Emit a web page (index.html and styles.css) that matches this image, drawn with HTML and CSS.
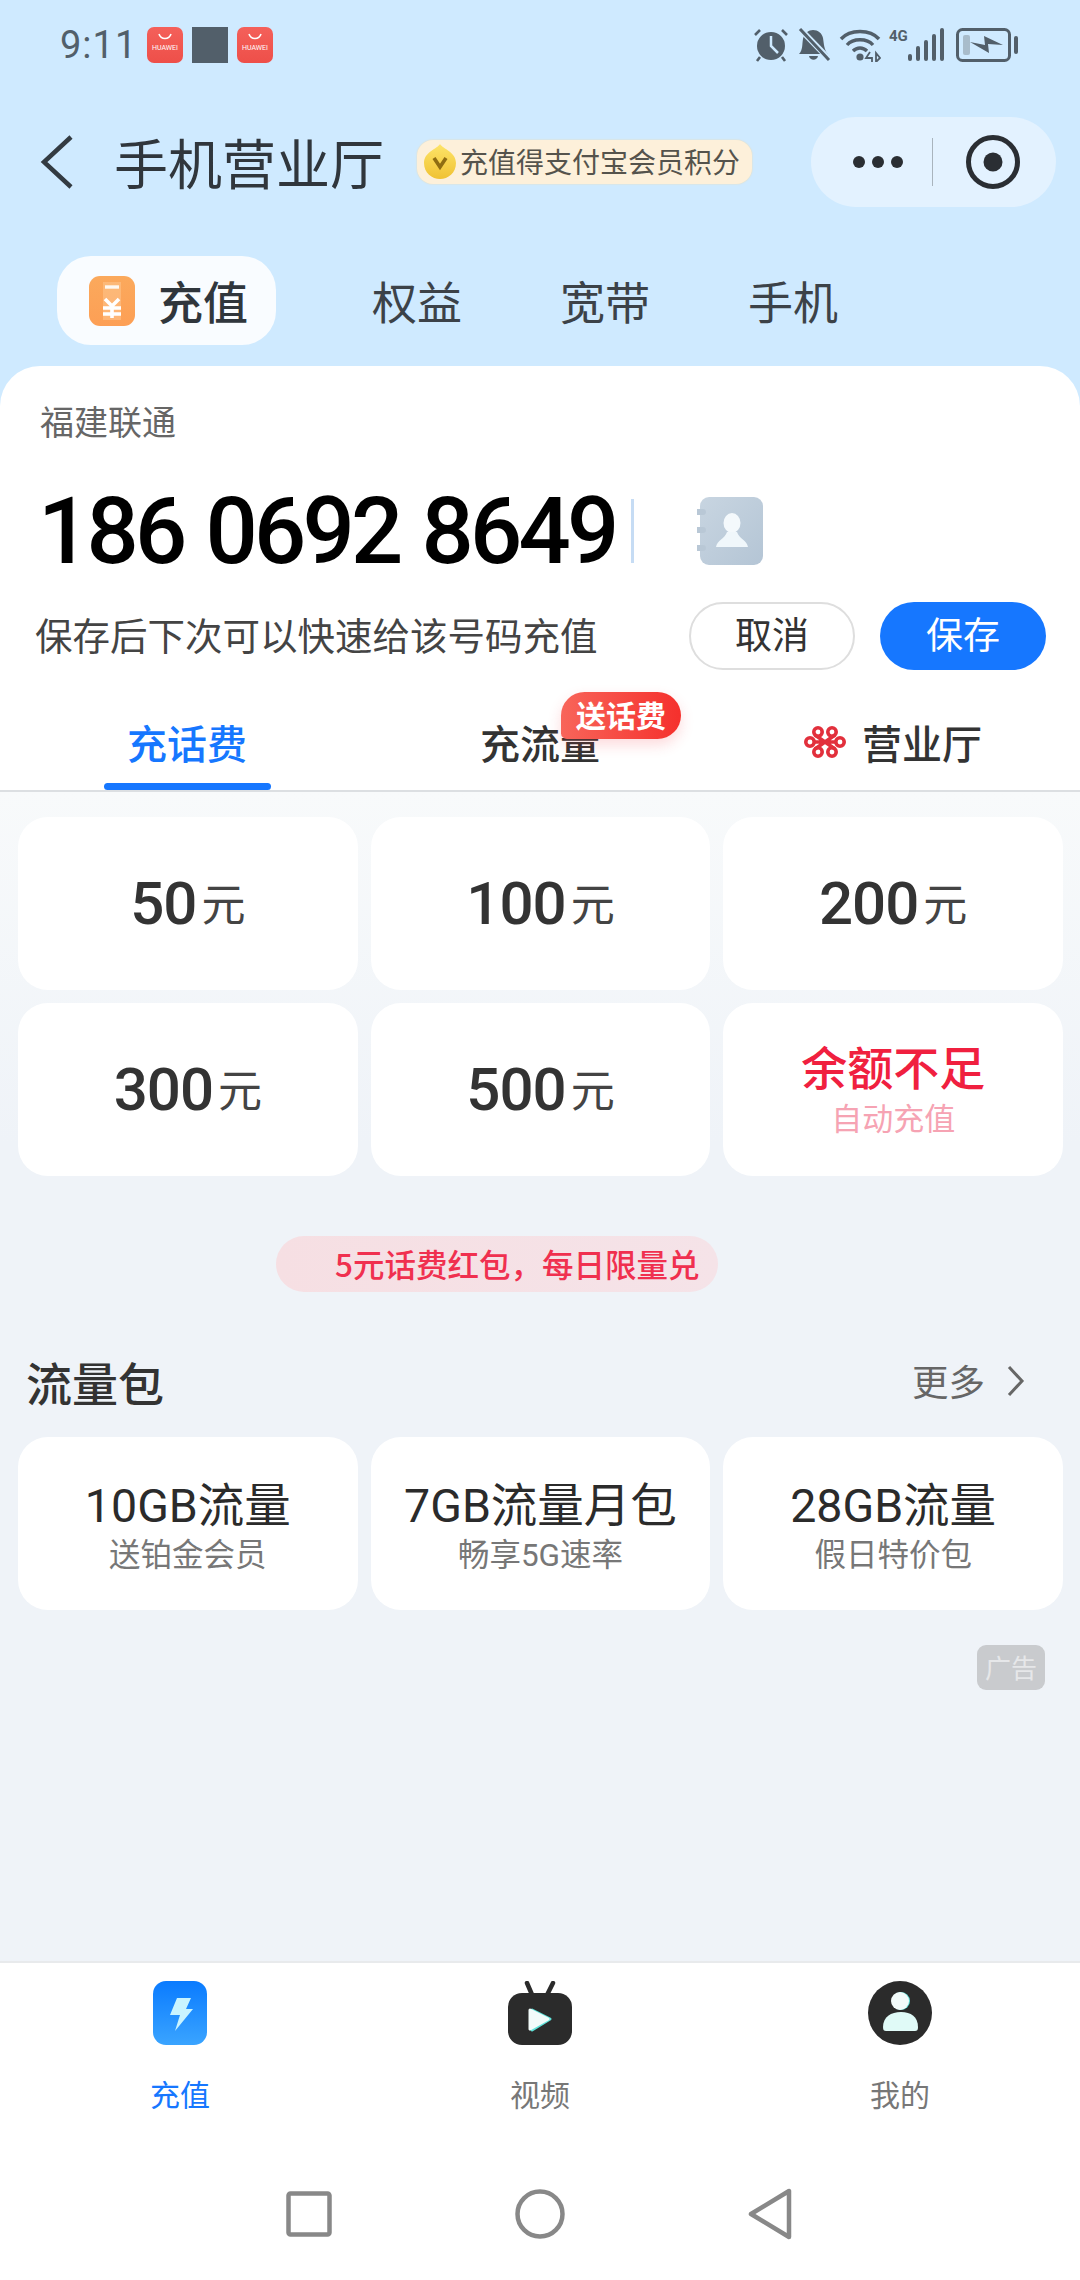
FILE: index.html
```html
<!DOCTYPE html>
<html lang="zh-CN">
  <head>
    <meta charset="UTF-8" />
    <meta name="viewport" content="width=device-width, initial-scale=1.0" />
    <title>手机营业厅</title>
    <link rel="stylesheet" href="styles.css">
  </head>
  <body>
    <div class="status-bar">
      <div class="status-left">
        <span class="time">9:11</span>
        <div class="app-icon"><svg width="16" height="8" viewBox="0 0 16 8" fill="none"><path d="M2 1C4 7 12 7 14 1" stroke="white" stroke-width="1.6"/></svg><span>HUAWEI</span></div>
        <div class="app-square"></div>
        <div class="app-icon"><svg width="16" height="8" viewBox="0 0 16 8" fill="none"><path d="M2 1C4 7 12 7 14 1" stroke="white" stroke-width="1.6"/></svg><span>HUAWEI</span></div>
      </div>
      <div class="status-right">
        <svg width="36" height="34" viewBox="0 0 36 34" fill="none">
          <circle cx="18" cy="18" r="14" fill="#525f6a"/>
          <path d="M18 8V18L25 25" stroke="#cfeaff" stroke-width="2.5"/>
          <path d="M2 7L7 2M34 7L29 2M7 29L4 33M29 29L32 33" stroke="#525f6a" stroke-width="2.6"/>
        </svg>
        <svg width="34" height="34" viewBox="0 0 34 34" fill="none">
          <path d="M2 26C6 22 5 16 6 11C7 5 12 2 16 2C21 2 25 5 26 10C27 16 27 22 31 26Z" fill="#525f6a"/>
          <path d="M12 28H21C20 33 13 33 12 28Z" fill="#525f6a"/>
          <path d="M3 1L32 31" stroke="#cfeaff" stroke-width="6"/>
          <path d="M3 1L32 32" stroke="#525f6a" stroke-width="3"/>
        </svg>
        <svg class="wifi" width="42" height="34" viewBox="0 0 42 34" fill="none">
          <path d="M2 11C11 1 31 1 40 11M8 17C14 10 28 10 34 17M14 23C18 19 24 19 28 23" stroke="#525f6a" stroke-width="3.4"/>
          <circle cx="21" cy="29" r="3.6" fill="#525f6a"/>
          <path d="M31 24L27 30H33V34M37 25V34L41 30Z" stroke="#525f6a" stroke-width="1.8"/>
        </svg>
        <div class="signal">
          <span class="net">4G</span>
          <svg width="36" height="34" viewBox="0 0 36 34" fill="#525f6a">
            <rect x="0" y="26" width="4" height="7" rx="2"/>
            <rect x="8" y="18" width="4" height="15" rx="2"/>
            <rect x="16" y="12" width="4" height="21" rx="2"/>
            <rect x="24" y="6" width="4" height="27" rx="2"/>
            <rect x="32" y="0" width="4" height="33" rx="2"/>
          </svg>
        </div>
        <svg class="battery" width="64" height="34" viewBox="0 0 64 34" fill="none">
          <rect x="1.5" y="1.5" width="52" height="31" rx="5" stroke="#525f6a" stroke-width="3"/>
          <rect x="7" y="7" width="7" height="20" rx="2" fill="#a8bccb"/>
          <path d="M13 15L28 18L27 9L46 18L31 17L32 26Z" fill="#525f6a" transform="translate(1 -1)"/>
          <rect x="58" y="8" width="4" height="18" rx="2" fill="#525f6a"/>
        </svg>
      </div>
    </div>

    <div class="nav-bar">
      <svg class="back" width="34" height="54" viewBox="0 0 34 54" fill="none">
        <path d="M31 2L4 27L31 52" stroke="#333b42" stroke-width="4.5"/>
      </svg>
      <div class="nav-title">手机营业厅</div>
      <div class="nav-tip">
        <svg width="32" height="36" viewBox="0 0 32 36">
          <defs>
            <linearGradient id="coin" x1="0" y1="0" x2="0" y2="1">
              <stop offset="0" stop-color="#fde469"/>
              <stop offset="1" stop-color="#f0c233"/>
            </linearGradient>
          </defs>
          <path d="M16 0C19 5 32 8 32 19C32 29 24 35 16 35C8 35 0 29 0 19C0 8 13 5 16 0Z" fill="url(#coin)"/>
          <path d="M10 14L16 23L22 14" fill="none" stroke="#8f6d12" stroke-width="3.6"/>
        </svg>
        <span>充值得支付宝会员积分</span>
      </div>
      <div class="capsule">
        <div class="dots"><i></i><i></i><i></i></div>
        <div class="capsule-line"></div>
        <svg width="54" height="54" viewBox="0 0 54 54" fill="none">
          <circle cx="27" cy="27" r="24.5" stroke="#2a2e33" stroke-width="5"/>
          <circle cx="27" cy="27" r="9.5" fill="#2a2e33"/>
        </svg>
      </div>
    </div>

    <div class="top-tabs">
      <div class="top-tab active">
        <svg width="46" height="50" viewBox="0 0 46 50">
          <defs>
            <linearGradient id="orange" x1="0" y1="0" x2="0" y2="1">
              <stop offset="0" stop-color="#fba95c"/>
              <stop offset="1" stop-color="#fd9f55"/>
            </linearGradient>
          </defs>
          <rect width="46" height="50" rx="11" fill="url(#orange)"/>
          <rect x="14" y="6" width="18" height="38" fill="#ffd9b0" opacity="0.35"/>
          <path d="M16 11H30" stroke="#fff" stroke-width="3.4" opacity="0.9"/>
          <path d="M16 23L23 30L30 23M23 30V42M14 32H32M14 38H32" fill="none" stroke="#fff" stroke-width="3.6"/>
        </svg>
        <span>充值</span>
      </div>
      <div class="top-tab">权益</div>
      <div class="top-tab">宽带</div>
      <div class="top-tab">手机</div>
    </div>

    <div class="sheet">
      <div class="carrier">福建联通</div>
      <div class="number-row">
        <div class="number">186 0692 8649</div>
        <div class="caret"></div>
        <svg class="contact" width="66" height="68" viewBox="0 0 66 68">
          <defs>
            <linearGradient id="book" x1="0" y1="0" x2="1" y2="1">
              <stop offset="0" stop-color="#c8d5e1"/>
              <stop offset="1" stop-color="#b4c5d5"/>
            </linearGradient>
          </defs>
          <rect x="3" y="0" width="63" height="68" rx="9" fill="url(#book)"/>
          <path d="M1 15H6M1 33H6M1 51H6" stroke="#b9c8d6" stroke-width="6" stroke-linecap="round"/>
          <ellipse cx="35" cy="26" rx="8.5" ry="10" fill="#f4f9fc"/>
          <path d="M19 50C20 43 28 42 30 35H40C42 42 50 43 51 50Z" fill="#f0f7fb"/>
        </svg>
      </div>
      <div class="save-row">
        <div class="save-hint">保存后下次可以快速给该号码充值</div>
        <div class="btn btn-cancel">取消</div>
        <div class="btn btn-save">保存</div>
      </div>
      <div class="tabs">
        <div class="tab active">
          <span>充话费</span>
          <div class="tab-line"></div>
        </div>
        <div class="tab">
          <span class="tab-label">充流量<em class="tab-badge">送话费</em></span>
          <div class="tab-line"></div>
        </div>
        <div class="tab">
          <span class="tab-logo">
            <svg width="42" height="32" viewBox="0 0 42 32" fill="none" stroke="#e2303c" stroke-width="3.6">
              <circle cx="14" cy="6" r="4.2"/>
              <circle cx="28" cy="6" r="4.2"/>
              <circle cx="14" cy="26" r="4.2"/>
              <circle cx="28" cy="26" r="4.2"/>
              <circle cx="6" cy="16" r="4.2"/>
              <circle cx="36" cy="16" r="4.2"/>
              <path d="M10 16H32M11 9L31 23M31 9L11 23"/>
            </svg>
            营业厅
          </span>
          <div class="tab-line"></div>
        </div>
      </div>

      <div class="main">
        <div class="grid">
          <div class="card amount"><b>50</b><span>元</span></div>
          <div class="card amount"><b>100</b><span>元</span></div>
          <div class="card amount"><b>200</b><span>元</span></div>
          <div class="card amount"><b>300</b><span>元</span></div>
          <div class="card amount"><b>500</b><span>元</span></div>
          <div class="card auto">
            <div class="auto-title">余额不足</div>
            <div class="auto-sub">自动充值</div>
          </div>
        </div>

        <div class="promo">5元话费红包，每日限量兑</div>

        <div class="section-head">
          <div class="section-title">流量包</div>
          <div class="more">
            更多
            <svg width="18" height="32" viewBox="0 0 18 32" fill="none"><path d="M2 2L15 16L2 30" stroke="#666" stroke-width="3"/></svg>
          </div>
        </div>

        <div class="grid packs">
          <div class="card pack"><div class="pack-title">10GB流量</div><div class="pack-sub">送铂金会员</div></div>
          <div class="card pack"><div class="pack-title">7GB流量月包</div><div class="pack-sub">畅享5G速率</div></div>
          <div class="card pack"><div class="pack-title">28GB流量</div><div class="pack-sub">假日特价包</div></div>
        </div>

        <div class="ad-row"><div class="ad-tag">广告</div></div>
      </div>

      <div class="tabbar">
        <div class="tabbar-item active">
          <svg width="54" height="64" viewBox="0 0 54 64">
            <defs>
              <linearGradient id="bolt" x1="0" y1="0" x2="0" y2="1">
                <stop offset="0" stop-color="#0a7bff"/>
                <stop offset="1" stop-color="#3aa4ff"/>
              </linearGradient>
            </defs>
            <rect width="54" height="64" rx="13" fill="url(#bolt)"/>
            <path d="M24 17H38L33 28H40L22 50L27 34H17Z" fill="#c9f4ff"/>
          </svg>
          <span>充值</span>
        </div>
        <div class="tabbar-item">
          <svg width="64" height="64" viewBox="0 0 64 64" fill="none">
            <path d="M19 2L25 16M45 2L38 16" stroke="#2b2b2b" stroke-width="4.5" stroke-linecap="round"/>
            <rect y="12" width="64" height="52" rx="14" fill="#2b2b2b"/>
            <path d="M24 29L42 38L24 49Z" fill="#5fe3da" stroke="#5fe3da" stroke-width="3" stroke-linejoin="round"/>
            <path d="M22 29L40 38L22 48Z" fill="#f2fbfa" stroke="#f2fbfa" stroke-width="3" stroke-linejoin="round"/>
          </svg>
          <span>视频</span>
        </div>
        <div class="tabbar-item">
          <svg width="64" height="64" viewBox="0 0 64 64">
            <circle cx="32" cy="32" r="32" fill="#2b2b2b"/>
            <circle cx="33" cy="20" r="9" fill="#5fe3da"/>
            <circle cx="32" cy="20" r="9" fill="#f2fbfa"/>
            <path d="M15 46C15 36 23 31 33 31C43 31 50 36 50 46C50 49 49 50 47 50H18C16 50 15 49 15 46Z" fill="#e0faf7"/>
          </svg>
          <span>我的</span>
        </div>
      </div>

      <div class="sys-nav">
        <svg width="46" height="46" viewBox="0 0 46 46" fill="none"><rect x="2.5" y="2.5" width="41" height="41" rx="2" stroke="#888" stroke-width="4.5"/></svg>
        <svg width="50" height="50" viewBox="0 0 50 50" fill="none"><circle cx="25" cy="25" r="22.5" stroke="#888" stroke-width="4.5"/></svg>
        <svg width="44" height="52" viewBox="0 0 44 52" fill="none"><path d="M41 3V49L3 26Z" stroke="#888" stroke-width="4.5" stroke-linejoin="round"/></svg>
      </div>
    </div>
  </body>
</html>
```

FILE: styles.css
```css
* {
  box-sizing: border-box;
}

html,
body {
  margin: 0;
  padding: 0;
}

body {
  width: 1080px;
  height: 2280px;
  overflow: hidden;
  display: flex;
  flex-direction: column;
  background-color: #cfeaff;
  color: #333;
  font-family: "Noto Sans CJK SC", Roboto, sans-serif;
}

svg {
  display: block;
  flex-shrink: 0;
}

/* status bar */
.status-bar {
  height: 90px;
  display: flex;
  align-items: center;
  justify-content: space-between;
  padding: 0 60px;
}

.status-left {
  display: flex;
  align-items: center;
}

.time {
  font-family: Roboto, sans-serif;
  font-size: 38px;
  color: #525f6a;
  width: 87px;
  letter-spacing: 1px;
}

.app-icon {
  width: 36px;
  height: 36px;
  border-radius: 7px;
  background: linear-gradient(#f4605a, #ee4f49);
  display: flex;
  flex-direction: column;
  align-items: center;
  padding-top: 6px;
  gap: 3px;
}

.app-icon span {
  font-family: Roboto, sans-serif;
  font-size: 7px;
  line-height: 8px;
  color: #fff;
}

.app-square {
  width: 36px;
  height: 36px;
  margin: 0 9px;
  background-color: #525f6a;
}

.status-right {
  display: flex;
  align-items: center;
  gap: 8px;
}

.signal {
  display: flex;
  align-items: flex-start;
}

.net {
  font-family: Roboto, sans-serif;
  font-size: 15px;
  line-height: 16px;
  font-weight: 700;
  color: #525f6a;
  margin-right: 1px;
  width: 18px;
}

.battery {
  margin-left: 4px;
}

/* mini program nav */
.nav-bar {
  height: 90px;
  margin-top: 27px;
  display: flex;
  align-items: center;
  padding-left: 40px;
}

.nav-title {
  font-size: 54px;
  line-height: 60px;
  margin-left: 40px;
  color: #30363c;
  width: 266px;
  white-space: nowrap;
}

.nav-tip {
  width: 335px;
  height: 44px;
  margin-left: 37px;
  border-radius: 16px;
  background-color: #fdf0da;
  box-shadow: 0 0 2px #f0dcae;
  display: flex;
  align-items: center;
  padding-left: 7px;
  gap: 4px;
}

.nav-tip span {
  font-size: 28px;
  padding-bottom: 2px;
  color: #55534c;
  white-space: nowrap;
}

.capsule {
  width: 245px;
  height: 90px;
  margin-left: 59px;
  border-radius: 45px;
  background-color: #e3f2ff;
  display: flex;
  align-items: center;
  padding-left: 42px;
}

.dots {
  display: flex;
  gap: 7px;
}

.dots i {
  width: 12px;
  height: 12px;
  border-radius: 50%;
  background-color: #2a2e33;
}

.capsule-line {
  width: 1px;
  height: 48px;
  margin: 0 33px 0 29px;
  background-color: #a9b4bd;
}

/* category tabs */
.top-tabs {
  height: 89px;
  margin-top: 49px;
  display: flex;
  align-items: center;
  padding-left: 57px;
}

.top-tab {
  font-size: 45px;
  color: #3c4248;
  margin-right: 98px;
}

.top-tab.active {
  width: 219px;
  height: 89px;
  margin-right: 96px;
  border-radius: 34px;
  background-color: #f9fcff;
  display: flex;
  align-items: center;
  padding-left: 32px;
  gap: 23px;
  color: #30363c;
  font-weight: 500;
}

/* white sheet */
.sheet {
  flex: 1;
  min-height: 0;
  margin-top: 21px;
  padding-top: 30px;
  border-radius: 40px 40px 0 0;
  background-color: #fff;
  display: flex;
  flex-direction: column;
}

.carrier {
  height: 50px;
  line-height: 50px;
  padding-left: 40px;
  font-size: 34px;
  color: #666;
}

.number-row {
  height: 80px;
  margin-top: 45px;
  display: flex;
  align-items: center;
  padding-left: 38px;
}

.number {
  font-family: Roboto, sans-serif;
  font-size: 92px;
  font-weight: 500;
  letter-spacing: -3.8px;
  word-spacing: 3px;
  color: #000;
  white-space: nowrap;
  width: 593px;
}

.caret {
  width: 3px;
  height: 64px;
  background-color: #c6dcf4;
}

.contact {
  margin-left: 63px;
}

.save-row {
  height: 68px;
  margin-top: 31px;
  display: flex;
  align-items: center;
  padding-left: 35px;
}

.save-hint {
  width: 654px;
  padding-bottom: 6px;
  font-size: 37.5px;
  color: #444;
  white-space: nowrap;
}

.btn {
  width: 166px;
  height: 68px;
  padding-bottom: 6px;
  border-radius: 34px;
  display: flex;
  align-items: center;
  justify-content: center;
  font-size: 37px;
}

.btn-cancel {
  border: 2px solid #dedede;
  color: #333;
}

.btn-save {
  margin-left: 25px;
  background-color: #1677ff;
  color: #fff;
}

.tabs {
  height: 122px;
  display: grid;
  grid-template-columns: 374px 332px 374px;
  border-bottom: 2px solid #dcdfe2;
}

.tab {
  display: flex;
  flex-direction: column;
  align-items: center;
  justify-content: flex-end;
  font-size: 40px;
  font-weight: 500;
  color: #333;
}

.tab span {
  line-height: 50px;
}

.tab.active {
  color: #1677ff;
}

.tab-line {
  width: 167px;
  height: 7px;
  margin-top: 16px;
  border-radius: 4px;
  background-color: transparent;
}

.tab.active .tab-line {
  background-color: #1677ff;
}

.tab-label {
  position: relative;
}

.tab-logo {
  display: flex;
  align-items: center;
  gap: 16px;
}

.tab-badge {
  position: absolute;
  left: 81px;
  top: -25px;
  width: 120px;
  height: 47px;
  line-height: 45px;
  text-align: center;
  border-radius: 24px 24px 24px 6px;
  background: linear-gradient(90deg, #f8655a, #f5302c);
  box-shadow: 0 6px 14px rgba(245, 48, 60, 0.18);
  color: #fff;
  font-style: normal;
  font-size: 30px;
  font-weight: 700;
}

/* recharge content */
.main {
  flex: 1;
  min-height: 0;
  padding: 25px 17px 0 18px;
  background: linear-gradient(#f8fafb, #eff3f8 30%);
}

.grid {
  display: grid;
  grid-template-columns: repeat(3, 1fr);
  gap: 13px 13px;
}

.card {
  height: 173px;
  border-radius: 30px;
  background-color: #fff;
  display: flex;
  align-items: center;
  justify-content: center;
}

.amount b {
  font-family: Roboto, sans-serif;
  font-size: 60px;
  font-weight: 500;
  letter-spacing: -1px;
  color: #333;
  line-height: 66px;
}

.amount span {
  font-size: 44px;
  padding-bottom: 3px;
  color: #444;
  margin-left: 5px;
}

.auto {
  flex-direction: column;
  padding-bottom: 6px;
}

.auto-title {
  font-size: 46px;
  line-height: 56px;
  margin-bottom: 4px;
  font-weight: 500;
  color: #f0203f;
}

.auto-sub {
  font-size: 31px;
  line-height: 40px;
  color: #f6a3b3;
}

.promo {
  width: 442px;
  height: 56px;
  margin: 60px 0 0 258px;
  padding-left: 59px;
  border-radius: 28px;
  background: linear-gradient(90deg, #f6dfe3, #f5e3e8);
  font-size: 31.5px;
  line-height: 54px;
  font-weight: 500;
  color: #f0304f;
  white-space: nowrap;
}

.section-head {
  height: 60px;
  margin-top: 61px;
  padding: 0 38px 5px 8px;
  display: flex;
  align-items: center;
  justify-content: space-between;
}

.section-title {
  font-size: 46px;
  font-weight: 500;
  color: #333;
}

.more {
  display: flex;
  align-items: center;
  gap: 22px;
  font-size: 36.5px;
  color: #666;
}

.packs {
  margin-top: 24px;
}

.pack {
  flex-direction: column;
  padding-top: 8px;
}

.pack-title {
  font-family: Roboto, "Noto Sans CJK SC", sans-serif;
  font-size: 46.5px;
  line-height: 56px;
  color: #2b2b2b;
}

.pack-sub {
  font-family: Roboto, "Noto Sans CJK SC", sans-serif;
  font-size: 31.5px;
  line-height: 44px;
  color: #777;
}

.ad-row {
  display: flex;
  justify-content: flex-end;
  margin-top: 35px;
  padding-right: 18px;
}

.ad-tag {
  width: 68px;
  height: 45px;
  border-radius: 9px;
  background-color: #c9cbce;
  color: #e6e7e9;
  font-size: 26px;
  line-height: 44px;
  text-align: center;
}

/* bottom tabs */
.tabbar {
  height: 179px;
  padding-top: 18px;
  border-top: 2px solid #e8eaec;
  display: grid;
  grid-template-columns: repeat(3, 360px);
}

.tabbar-item {
  display: flex;
  flex-direction: column;
  align-items: center;
  gap: 30px;
  font-size: 30px;
  line-height: 36px;
  color: #777;
}

.tabbar-item.active {
  color: #1677ff;
}

.sys-nav {
  height: 140px;
  padding: 8px 0 0 286px;
  display: flex;
  align-items: center;
}

.sys-nav svg:nth-child(2) {
  margin-left: 183px;
}

.sys-nav svg:nth-child(3) {
  margin-left: 183px;
}
```
